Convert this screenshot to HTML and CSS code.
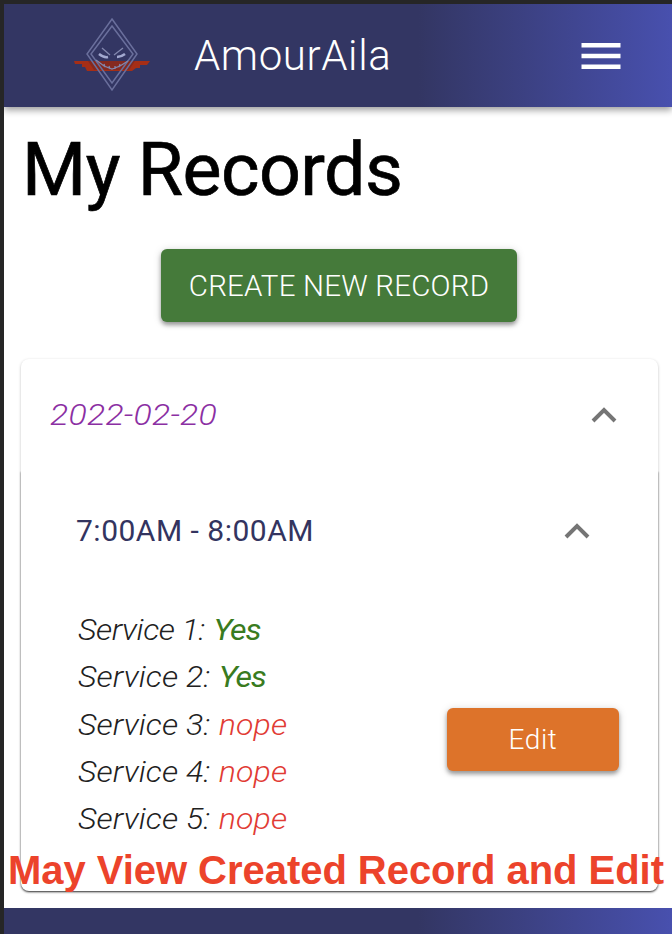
FILE: index.html
```html
<!DOCTYPE html>
<html lang="en">
<head>
<meta charset="utf-8">
<title>AmourAila</title>
<link rel="stylesheet" href="styles.css">
</head>
<body>
<div class="app">
  <header class="bar">
    <svg class="logo" viewBox="0 0 80 80" width="80" height="80">
      <path class="ribbon" d="M2 45H78L75 49H68V52H64L60 55H15L13 51H10V48H3Z"/>
      <path class="ribbon-dark" d="M16 45h47l-6 9H22z"/>
      <path class="diamond" d="M40 3 65 38 40 74 15 38ZM40 10 61 38 40 67 19 38Z"/>
      <path class="eye" d="M27 38q5 4 9 3M53 38q-4 3-8 3"/>
      <path class="brow" d="M30 32l8 7M51 32l-9 7M24 44l8 6 8 3 8-3 8-5M32 48l1 3M37 50l1 3M43 50v3M48 48l-1 3"/>
    </svg>
    <span class="brand">AmourAila</span>
    <svg class="menu" viewBox="0 0 40 28" width="40" height="28"><path d="M.5 1h39v4.5H.5zM.5 11.7h39v4.5H.5zM.5 22.5h39V27H.5z"/></svg>
  </header>
  <main class="content">
    <h1 class="title">My Records</h1>
    <button class="btn create"><span>CREATE NEW RECORD</span></button>
    <section class="card">
      <div class="summary">
        <span class="date">2022-02-20</span>
        <svg class="chevron" viewBox="0 0 26 16" width="26" height="16"><path d="M2 14 13 3 24 14"/></svg>
      </div>
      <div class="panel">
        <div class="summary inner">
          <span class="time">7:00AM - 8:00AM</span>
          <svg class="chevron" viewBox="0 0 26 16" width="26" height="16"><path d="M2 14 13 3 24 14"/></svg>
        </div>
        <div class="details">
          <ul class="services">
            <li><span class="narrow">Service 1:</span><span class="yes">Yes</span></li>
            <li><span>Service 2:</span><span class="yes">Yes</span></li>
            <li><span>Service 3:</span><span class="no">nope</span></li>
            <li><span>Service 4:</span><span class="no">nope</span></li>
            <li><span>Service 5:</span><span class="no">nope</span></li>
          </ul>
          <button class="btn edit"><span>Edit</span></button>
        </div>
      </div>
    </section>
  </main>
  <footer class="foot"></footer>
  <p class="caption">May View Created Record and Edit</p>
</div>
</body>
</html>
```
FILE: styles.css
```css
* { box-sizing: border-box; }
body { margin: 0; background: #fff; font-family: Roboto, "Open Sans", sans-serif; font-weight: 300; }
.app { position: relative; display: flex; flex-direction: column; height: 934px; border: 4px solid #262626; border-width: 4px 0 0 4px; overflow: hidden; }
.bar { display: flex; align-items: center; flex: none; height: 103px; padding-left: 68px; background: linear-gradient(90deg, #333663 0%, #333663 62%, #4850ae 100%); box-shadow: 0 3px 7px rgba(0,0,0,.4); }
.logo { flex: none; fill: none; }
.ribbon { fill: #a52e16; }
.ribbon-dark { fill: #85291f; }
.diamond { stroke: #6a6f9c; stroke-width: 1.5; }
.eye { stroke: #a3a9d0; stroke-width: 2.6; }
.brow { stroke: #8287ae; stroke-width: 1.3; }
.brand { width: 300px; margin-left: 42px; padding-top: 1px; color: #fff; font-size: 42px; line-height: 50px; letter-spacing: .6px; }
.menu { margin-left: 87px; fill: #fff; }
.content { flex: none; display: flex; flex-direction: column; height: 801px; padding: 24px 14px 0 17px; }
.title { margin: 0; height: 80px; padding-left: 1px; font-size: 73.5px; line-height: 78px; font-weight: 400; color: #000; letter-spacing: -.5px; white-space: nowrap; -webkit-text-stroke: .7px #000; }
.btn { display: flex; align-items: center; justify-content: center; border: 0; padding: 0; border-radius: 6px; font-family: inherit; font-weight: 300; color: #fff; box-shadow: 0 3px 4px rgba(0,0,0,.35), 0 1px 8px rgba(0,0,0,.15); }
.create { flex: none; width: 356px; height: 73px; margin: 38px 0 37px 140px; background: #457a3a; font-size: 29.5px; letter-spacing: .2px; white-space: nowrap; }
.card { height: 532px; border-radius: 8px; background: #fff; box-shadow: 0 1px 3px rgba(0,0,0,.25); }
.summary { display: flex; align-items: center; justify-content: space-between; height: 112px; padding: 0 41px 0 29px; }
.date { font-size: 30px; line-height: 36px; padding-bottom: 1px; font-style: italic; color: #8b2fa3; letter-spacing: .2px; transform: scaleX(1.13); transform-origin: left; }
.chevron { fill: none; stroke: #757575; stroke-width: 4; }
.panel { height: 420px; border-radius: 0 0 8px 8px; background: #fff; box-shadow: 0 1px 2px rgba(0,0,0,.7); clip-path: inset(0 -6px -6px -6px); }
.inner { height: 120px; padding: 0 68px 0 55px; }
.time { padding-bottom: 2px; font-size: 30px; font-weight: 400; color: #33345f; letter-spacing: .5px; }
.details { display: flex; justify-content: space-between; align-items: flex-start; padding: 15px 39px 0 57px; }
.services { margin: 0; padding: 0; list-style: none; font-size: 30px; font-style: italic; color: #212121; letter-spacing: .1px; transform: scaleX(1.07); transform-origin: left; }
.services li { display: flex; gap: 8px; height: 47.25px; line-height: 47px; }
.services .narrow { letter-spacing: -.4px; }
.yes { color: #397b20; font-weight: 400; letter-spacing: -1px; }
.no { color: #e13b34; }
.edit { width: 172px; height: 63px; margin-top: 102px; background: #dd732a; font-size: 28px; letter-spacing: .6px; }
.foot { flex: none; height: 26px; background: linear-gradient(90deg, #333663 0%, #333663 62%, #4850ae 100%); }
.caption { position: absolute; left: 4px; top: 843px; margin: 0; font: bold 40px/46px "Liberation Sans", sans-serif; letter-spacing: -.04px; color: #ec432b; white-space: nowrap; }
```
